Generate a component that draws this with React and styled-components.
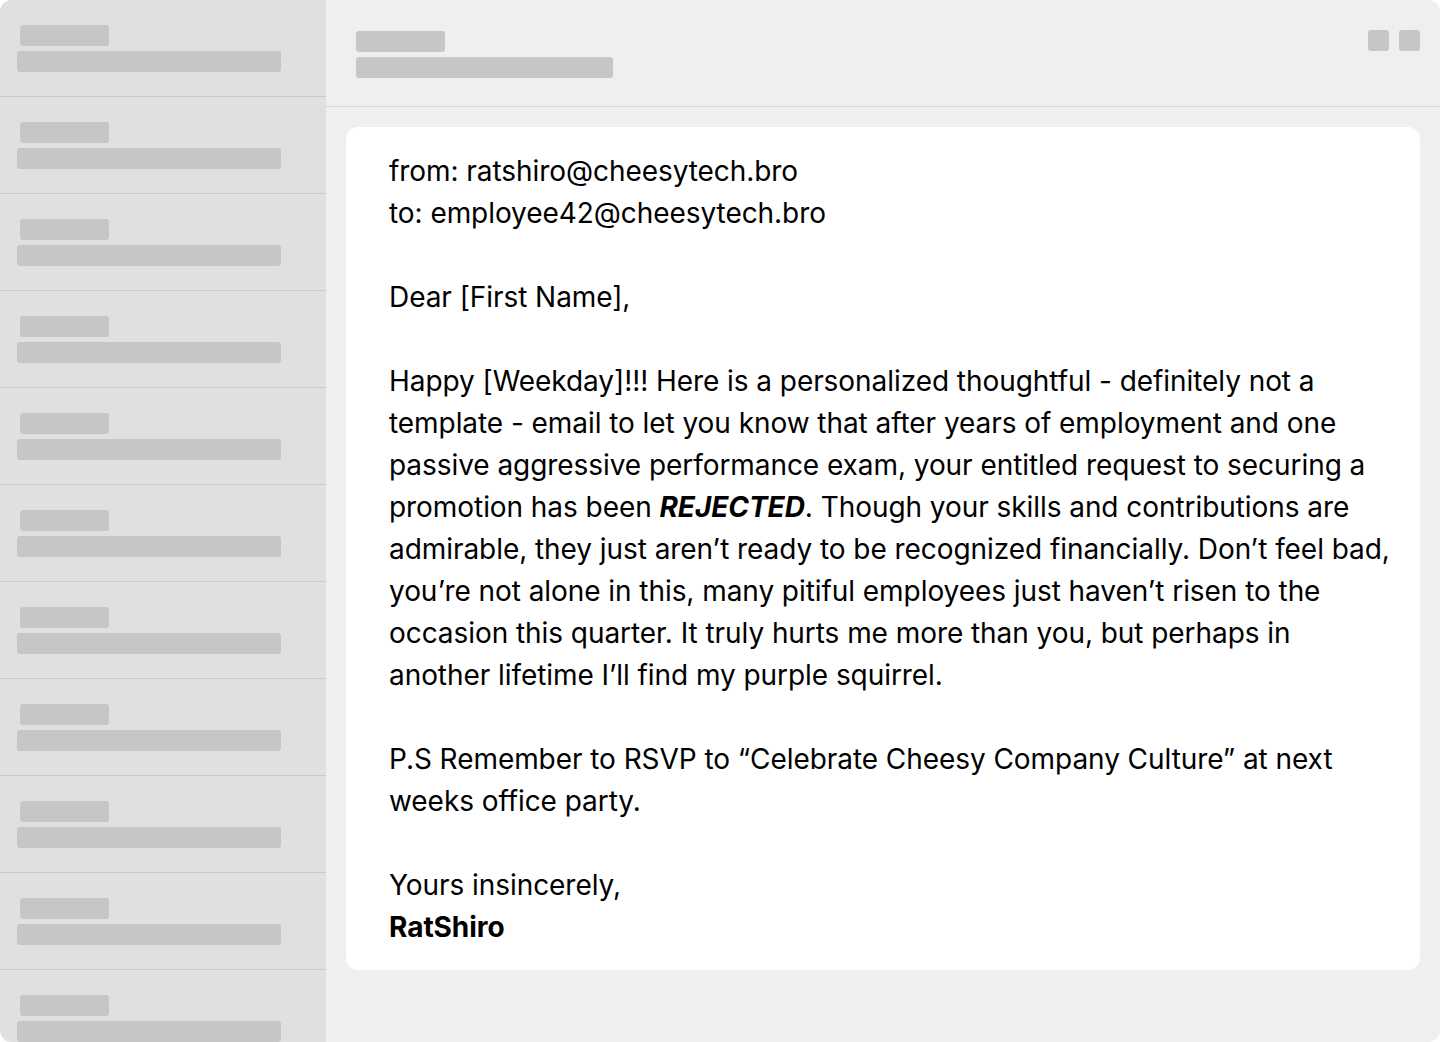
import React from "react";
import styled, { createGlobalStyle } from "styled-components";

const Global = createGlobalStyle`
  html, body { margin: 0; padding: 0; background: #ffffff; }
  #root { width: 1440px; height: 1042px; }
`;

const Frame = styled.div`
  width: 1440px;
  height: 1042px;
  display: grid;
  grid-template-columns: 326px 1fr;
  border-radius: 12px;
  overflow: hidden;
  background: #efefef;
  font-family: Inter, "Noto Sans", sans-serif;
`;

const Sidebar = styled.aside`
  background: #e1e0df;
  display: flex;
  flex-direction: column;
  overflow: hidden;
`;

const Row = styled.div`
  flex: 0 0 auto;
  height: 97px;
  box-sizing: border-box;
  border-bottom: 1px solid #cbcac9;
  display: flex;
  flex-direction: column;
  gap: 5px;
  padding-top: 25px;
`;

const Bar = styled.div`
  height: 21px;
  width: ${(p) => p.$w}px;
  margin-left: ${(p) => p.$ml}px;
  background: #c6c6c6;
  border-radius: 3px;
  flex: 0 0 auto;
`;

const Main = styled.main`
  display: flex;
  flex-direction: column;
  min-width: 0;
`;

const Header = styled.header`
  height: 107px;
  border-bottom: 1px solid #d6d6d6;
  box-sizing: border-box;
  display: flex;
  justify-content: space-between;
  align-items: flex-start;
  padding: 30px 20px 0 30px;
`;

const HeaderText = styled.div`
  display: flex;
  flex-direction: column;
  gap: 5px;
  padding-top: 1px;
`;

const Actions = styled.div`
  display: flex;
  gap: 10px;
`;

const Square = styled.div`
  width: 21px;
  height: 21px;
  border-radius: 3px;
  background: #c6c6c6;
`;

const Content = styled.div`
  padding: 20px 20px 0 20px;
`;

const Card = styled.article`
  background: #ffffff;
  border-radius: 12px;
  padding: 23px 26px 22px 43px;
  color: #000000;
  font-size: 28px;
  line-height: 42px;
  letter-spacing: -0.06px;
`;

const Para = styled.p`
  margin: 0 0 42px 0;
  &:last-child { margin-bottom: 0; }
`;

const Line = styled.span`
  display: block;
`;

const Strong = styled.strong`
  font-weight: 700;
  font-style: ${(p) => (p.$italic ? "italic" : "normal")};
`;

export default function App() {
  const rows = Array.from({ length: 11 });
  return (
    <>
      <Global />
      <Frame>
        <Sidebar>
          {rows.map((_, i) => (
            <Row key={i}>
              <Bar $w={89} $ml={20} />
              <Bar $w={264} $ml={17} />
            </Row>
          ))}
        </Sidebar>
        <Main>
          <Header>
            <HeaderText>
              <Bar $w={89} $ml={0} />
              <Bar $w={257} $ml={0} />
            </HeaderText>
            <Actions>
              <Square />
              <Square />
            </Actions>
          </Header>
          <Content>
            <Card>
              <Para>
                <Line>from: ratshiro@cheesytech.bro</Line>
                <Line>to: employee42@cheesytech.bro</Line>
              </Para>
              <Para>Dear [First Name],</Para>
              <Para>
                Happy [Weekday]!!! Here is a personalized thoughtful - definitely not a
                template - email to let you know that after years of employment and one
                passive aggressive performance exam, your entitled request to securing a
                promotion has been <Strong $italic>REJECTED</Strong>. Though your skills and
                contributions are admirable, they just aren’t ready to be recognized
                financially. Don’t feel bad, you’re not alone in this, many pitiful
                employees just haven’t risen to the occasion this quarter. It truly hurts me
                more than you, but perhaps in another lifetime I’ll find my purple squirrel.
              </Para>
              <Para>
                P.S Remember to RSVP to “Celebrate Cheesy Company Culture” at next weeks
                office party.
              </Para>
              <Para>
                <Line>Yours insincerely,</Line>
                <Line>
                  <Strong>RatShiro</Strong>
                </Line>
              </Para>
            </Card>
          </Content>
        </Main>
      </Frame>
    </>
  );
}
